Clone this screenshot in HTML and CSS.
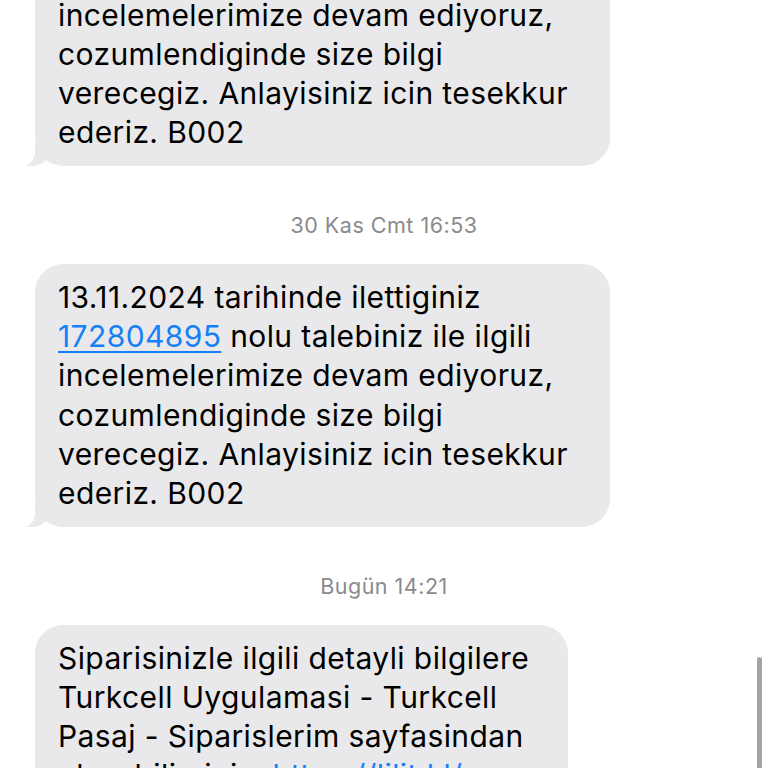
FILE: index.html
```html
<!DOCTYPE html>
<html lang="tr">
<head>
<meta charset="utf-8">
<title>Mesajlar</title>
<link rel="stylesheet" href="styles.css">
</head>
<body>
<div class="thread">
  <div class="bubble wide first">
    13.11.2024 tarihinde ilettiginiz<br>
    <a class="link" href="#">172804895</a> nolu talebiniz ile ilgili<br>
    incelemelerimize devam ediyoruz,<br>
    cozumlendiginde size bilgi<br>
    verecegiz. Anlayisiniz icin tesekkur<br>
    ederiz. B002
  </div>
  <div class="stamp">30 Kas Cmt 16:53</div>
  <div class="bubble wide">
    13.11.2024 tarihinde ilettiginiz<br>
    <a class="link" href="#">172804895</a> nolu talebiniz ile ilgili<br>
    incelemelerimize devam ediyoruz,<br>
    cozumlendiginde size bilgi<br>
    verecegiz. Anlayisiniz icin tesekkur<br>
    ederiz. B002
  </div>
  <div class="stamp">Bugün 14:21</div>
  <div class="bubble narrow">
    Siparisinizle ilgili detayli bilgilere<br>
    Turkcell Uygulamasi - Turkcell<br>
    Pasaj - Siparislerim sayfasindan<br>
    ulasabilirsiniz: <a class="link" href="#">https://lilit.kl/</a>
  </div>
</div>
<div class="scrollbar"></div>
</body>
</html>
```

FILE: styles.css
```css
html, body {
  margin: 0;
  padding: 0;
  background: #ffffff;
  overflow: hidden;
  height: 768px;
}

body {
  font-family: "Inter", "Roboto", "Liberation Sans", sans-serif;
  -webkit-font-smoothing: antialiased;
}

.thread {
  display: flex;
  flex-direction: column;
  align-items: flex-start;
  padding: 0 0 0 35px;
  margin-top: -97px;
}

.bubble {
  position: relative;
  box-sizing: border-box;
  background: #e9e9eb;
  color: #000000;
  font-size: 30px;
  letter-spacing: 0.4px;
  line-height: 39.3px;
  padding: 14px 20px 13px 23px;
  border-radius: 28px;
  white-space: nowrap;
}

.bubble::before {
  content: "";
  position: absolute;
  left: -9px;
  bottom: 0;
  width: 24px;
  height: 22px;
  background: #e9e9eb;
  border-bottom-right-radius: 18px 16px;
}

.bubble::after {
  content: "";
  position: absolute;
  left: -14px;
  bottom: 0;
  width: 14px;
  height: 24px;
  background: #ffffff;
  border-bottom-right-radius: 12px 14px;
}

.wide {
  width: 575px;
}

.narrow {
  width: 533px;
}

.link {
  color: #1580f7;
  text-decoration: underline;
  text-decoration-thickness: 2px;
  text-underline-offset: 4px;
}

.stamp {
  align-self: stretch;
  margin: 47px 35px 27px 0;
  text-align: center;
  font-size: 21.5px;
  letter-spacing: 0.5px;
  line-height: 24px;
  color: #8a8a8e;
}

.scrollbar {
  position: fixed;
  right: 6px;
  top: 657px;
  width: 5px;
  height: 140px;
  border-radius: 3px;
  background: #a3a3a3;
}
```
